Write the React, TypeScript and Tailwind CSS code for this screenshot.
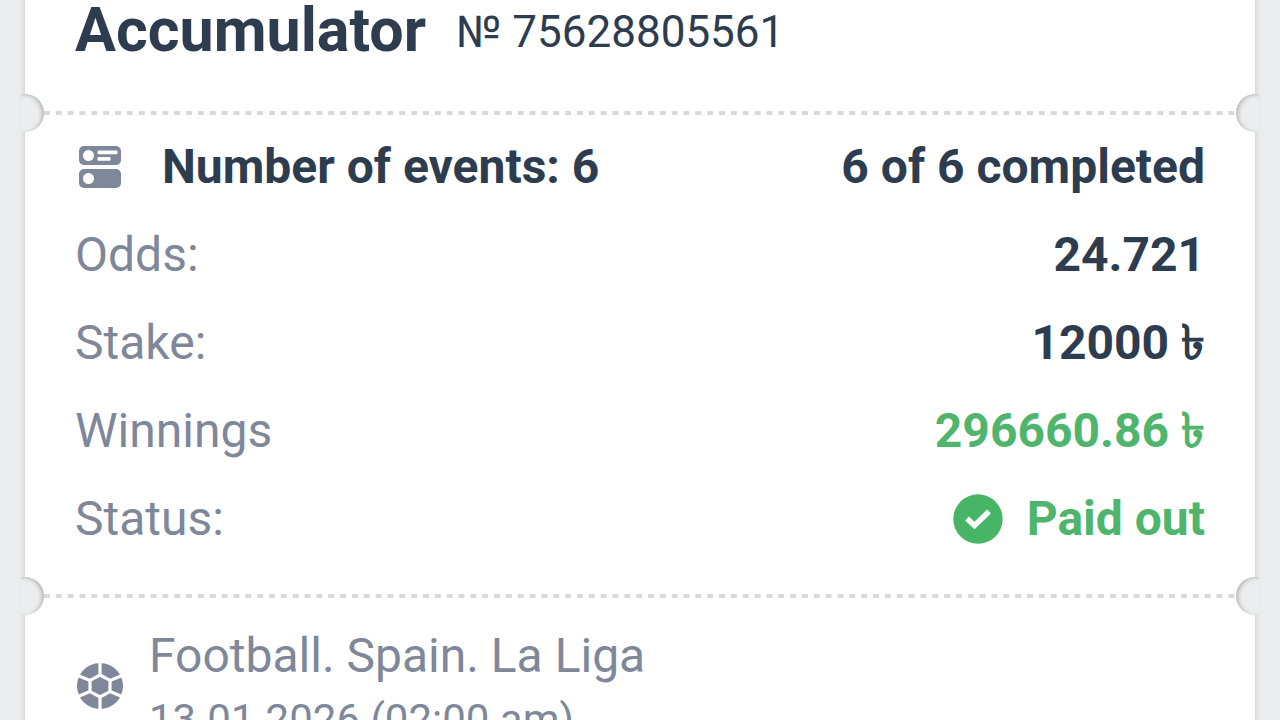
import React from 'react';

const EventsIcon = () => (
  <svg viewBox="0 0 42 42" className="w-[42px] h-[42px] shrink-0" aria-hidden="true">
    <rect width="42" height="19" rx="5" fill="#7f879a" />
    <rect y="23" width="42" height="19" rx="5" fill="#7f879a" />
    <circle cx="9.5" cy="9.5" r="5.5" fill="#fff" />
    <circle cx="9.5" cy="32.5" r="5.5" fill="#fff" />
    <rect x="18.5" y="4.5" width="20" height="3.8" rx="1.2" fill="#fff" />
    <rect x="18.5" y="11" width="13" height="3.8" rx="1.2" fill="#fff" />
  </svg>
);

const FootballIcon = () => (
  <svg viewBox="-23 -23 46 46" className="w-[46px] h-[46px] shrink-0" aria-hidden="true">
    <circle r="23" fill="#7f879a" />
    <g fill="none" stroke="#fff" strokeWidth="3.2">
      <path d="M0-11 10-5.6V5.6L0 11-10 5.6V-5.6Z" />
      <path d="M0-10V-24M0 10V24M10-5.6 22-10.5M10 5.6 22 10.5M-10-5.6-22-10.5M-10 5.6-22 10.5" />
    </g>
  </svg>
);

const PaidIcon = () => (
  <svg viewBox="0 0 50 50" className="w-[50px] h-[50px] shrink-0" aria-hidden="true">
    <circle cx="25" cy="25" r="24.7" fill="#46b666" />
    <path d="m14 24.5 7.5 7L36 17.5" fill="none" stroke="#fff" strokeWidth="5.4" />
  </svg>
);

// Perforated line between two parts of the ticket
const Perforation = () => (
  <div className="relative flex h-[38px] items-center px-[19px]">
    <div className="absolute -left-1 top-0 h-[38px] w-[23px] rounded-r-[19px] bg-[#ecedef] shadow-[inset_-3px_1px_4px_-1px_#b4b4b8]" />
    <div className="h-1 grow pr-[7px] bg-origin-content bg-[linear-gradient(to_right,#d9d9db_50%,transparent_50%)] bg-size-[1%_100%]" />
    <div className="absolute -right-1 top-0 h-[38px] w-[23px] rounded-l-[19px] bg-[#ecedef] shadow-[inset_3px_1px_4px_-1px_#b4b4b8]" />
  </div>
);

const Row: React.FC<{ label: string; green?: boolean; children: React.ReactNode }> = ({ label, green, children }) => (
  <div className="flex items-center justify-between">
    <dt className="text-[#7f879a]">{label}</dt>
    <dd className={`flex items-center gap-6 font-bold ${green ? 'text-[#4fb56c]' : ''}`}>{children}</dd>
  </div>
);

export default function App() {
  return (
    <main className="h-screen overflow-hidden bg-[#ecedef] px-[25px] font-['Roboto','Noto_Sans',sans-serif] text-[#2e3c50]">
      <article className="min-h-full bg-white shadow-[0_0_6px_#c0c1c4]">
        <header className="flex items-end gap-[30px] px-[50px] pb-[34px]">
          <h1 className="text-[61px] leading-[60px] font-bold">Accumulator</h1>
          <p className="text-[44px] leading-[56px]">№ 75628805561</p>
        </header>

        <Perforation />

        <section className="flex flex-col gap-8 px-[50px] pt-[7px] pb-[30px] text-[48px] leading-[56px]">
          <div className="flex items-center justify-between font-bold">
            <h2 className="flex items-center gap-[41px] pl-1">
              <EventsIcon />
              Number of events: 6
            </h2>
            <p>6 of 6 completed</p>
          </div>
          <dl className="flex flex-col gap-8">
            <Row label="Odds:">24.721</Row>
            <Row label="Stake:">12000 ৳</Row>
            <Row label="Winnings" green>296660.86 ৳</Row>
            <Row label="Status:" green>
              <PaidIcon />
              Paid out
            </Row>
          </dl>
        </section>

        <Perforation />

        <section className="flex items-center gap-6 px-[52px] pt-[13px] text-[#7f879a]">
          <FootballIcon />
          <div className="flex flex-col gap-3 pl-0.5">
            <h3 className="text-[48px] leading-[56px]">Football. Spain. La Liga</h3>
            <time className="text-[42px] leading-[48px]" dateTime="2026-01-13T02:00">13.01.2026 (02:00 am)</time>
          </div>
        </section>
      </article>
    </main>
  );
}
